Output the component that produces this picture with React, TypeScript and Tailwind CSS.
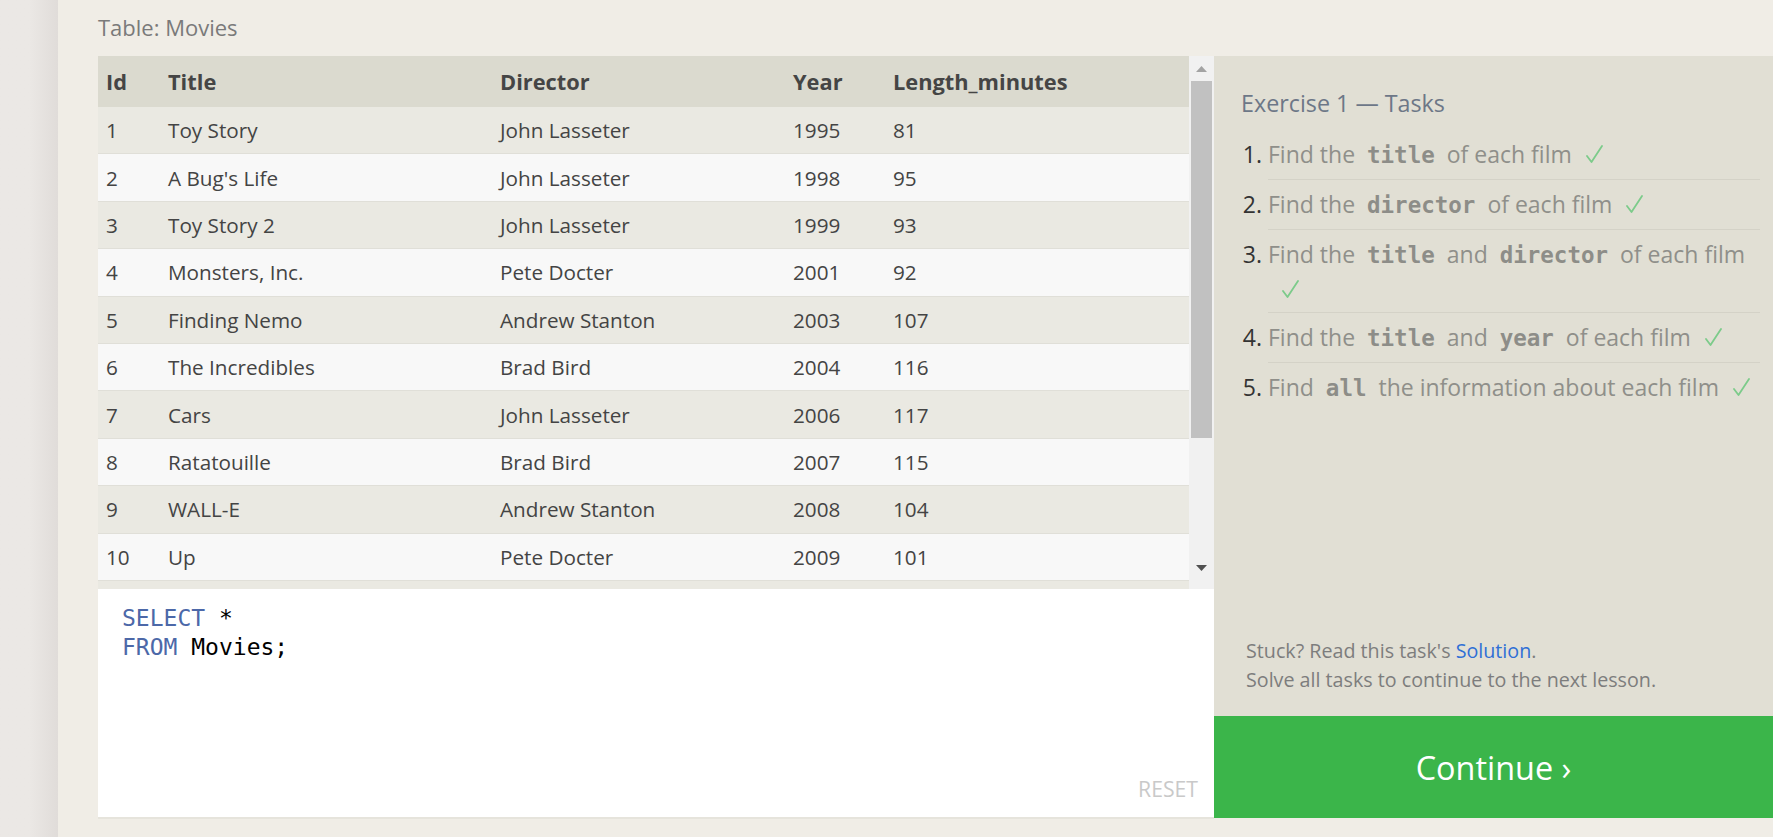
import React from "react";

const rows: [string, string, string, string, string][] = [
  ["1", "Toy Story", "John Lasseter", "1995", "81"],
  ["2", "A Bug's Life", "John Lasseter", "1998", "95"],
  ["3", "Toy Story 2", "John Lasseter", "1999", "93"],
  ["4", "Monsters, Inc.", "Pete Docter", "2001", "92"],
  ["5", "Finding Nemo", "Andrew Stanton", "2003", "107"],
  ["6", "The Incredibles", "Brad Bird", "2004", "116"],
  ["7", "Cars", "John Lasseter", "2006", "117"],
  ["8", "Ratatouille", "Brad Bird", "2007", "115"],
  ["9", "WALL-E", "Andrew Stanton", "2008", "104"],
  ["10", "Up", "Pete Docter", "2009", "101"],
];

const sans = "font-['Open_Sans',sans-serif]";
const mono = "font-['DejaVu_Sans_Mono',monospace]";

function Code({ children }: { children: React.ReactNode }) {
  return (
    <span className={`${mono} font-bold text-[22.5px] text-[#8d8d88] px-[6px]`}>{children}</span>
  );
}

function Check() {
  return (
    <svg
      className="ml-[14px] inline-block align-baseline"
      width="17"
      height="18"
      viewBox="0 0 17 18"
      fill="none"
    >
      <path d="M1 11 L5.5 17 L16 1" stroke="#7ccb8a" strokeWidth="1.8" strokeLinecap="round" strokeLinejoin="round" />
    </svg>
  );
}

const liCls = "border-b border-[#d4d2c7] py-[7px] leading-[34px]";

export default function App() {
  return (
    <div className={`flex min-h-[837px] w-full bg-[#f0ede6] ${sans}`}>
      <div className="w-[58px] shrink-0 bg-linear-to-r from-[#ebe8e5] from-50% to-[#e0dcd9]" />
      <div className="flex flex-1 flex-col pl-[40px]">
        <div className="flex h-[56px] items-start pt-[12px] text-[22px] leading-[30px] text-[#7a7a7a]">Table: Movies</div>
        <div className="flex">
          {/* left: table + editor */}
          <div className="flex w-[1116px] shrink-0 flex-col">
            <div className="flex h-[533px] bg-[#eae9e2]">
              <div className="flex w-[1091px] flex-col">
                <div className="flex h-[51px] items-center bg-[#dbdacf] pt-[1px] text-[21.8px] font-bold text-[#454545]">
                  <div className="w-[62px] pl-[8px]">Id</div>
                  <div className="w-[332px] pl-[8px]">Title</div>
                  <div className="w-[293px] pl-[8px]">Director</div>
                  <div className="w-[100px] pl-[8px]">Year</div>
                  <div className="flex-1 pl-[8px]">Length_minutes</div>
                </div>
                {rows.map((r, i) => (
                  <div
                    key={r[0]}
                    className={`flex h-[47.4px] items-center border-b border-[#e0dfd8] pt-[1px] text-[20.7px] text-[#444] ${
                      i % 2 === 0 ? "bg-[#eae9e2]" : "bg-[#f8f8f8]"
                    }`}
                  >
                    <div className="w-[62px] pl-[8px]">{r[0]}</div>
                    <div className="w-[332px] pl-[8px]">{r[1]}</div>
                    <div className="w-[293px] pl-[8px]">{r[2]}</div>
                    <div className="w-[100px] pl-[8px]">{r[3]}</div>
                    <div className="flex-1 pl-[8px]">{r[4]}</div>
                  </div>
                ))}
              </div>
              {/* scrollbar */}
              <div className="flex w-[25px] flex-col bg-[#f1f1f1]">
                <div className="flex h-[25px] items-center justify-center">
                  <svg width="11" height="6" viewBox="0 0 11 6">
                    <path d="M5.5 0 L11 6 L0 6 Z" fill="#a3a3a3" />
                  </svg>
                </div>
                <div className="mx-[2px] h-[357px] bg-[#c1c1c1]" />
                <div className="flex-1" />
                <div className="flex h-[28px] items-start justify-center pt-[4px]">
                  <svg width="11" height="6" viewBox="0 0 11 6">
                    <path d="M0 0 L11 0 L5.5 6 Z" fill="#505050" />
                  </svg>
                </div>
              </div>
            </div>
            {/* editor */}
            <div className="relative h-[230px] border-b-2 border-[#e6e4dc] bg-white pl-[24px] pt-[15px]">
              <div className={`${mono} text-[23px] leading-[29px] text-black`}>
                <div>
                  <span className="text-[#4c68a8]">SELECT</span> *
                </div>
                <div>
                  <span className="text-[#4c68a8]">FROM</span> Movies;
                </div>
              </div>
              <div className="absolute bottom-[12px] right-[16px] text-[21.2px] text-[#c9c9c9]">RESET</div>
            </div>
          </div>
          {/* right panel */}
          <div className="flex h-[762px] flex-1 flex-col bg-[#e1dfd4]">
            <div className="flex-1 pl-[27px] pr-[13px] pt-[31px]">
              <div className="text-[23.3px] leading-[32px] text-[#6d7787]">Exercise 1 — Tasks</div>
              <ol className="mt-[11px] list-decimal pl-[27px] text-[23px] text-[#333] marker:text-[#333]">
                <li className={liCls}>
                  <span className="text-[#8f8f8a]">
                    Find the <Code>title</Code> of each film
                    <Check />
                  </span>
                </li>
                <li className={liCls}>
                  <span className="text-[#8f8f8a]">
                    Find the <Code>director</Code> of each film
                    <Check />
                  </span>
                </li>
                <li className="border-b border-[#d4d2c7] pb-[6px] pt-[7px] leading-[34px]">
                  <span className="text-[#8f8f8a]">
                    Find the <Code>title</Code> and <Code>director</Code> of each film
                    <br />
                    <Check />
                  </span>
                </li>
                <li className={liCls}>
                  <span className="text-[#8f8f8a]">
                    Find the <Code>title</Code> and <Code>year</Code> of each film
                    <Check />
                  </span>
                </li>
                <li className="py-[7px] leading-[34px]">
                  <span className="text-[#8f8f8a]">
                    Find <Code>all</Code> the information about each film
                    <Check />
                  </span>
                </li>
              </ol>
            </div>
            <div className="pb-[22px] pl-[32px] text-[19.7px] leading-[29px] text-[#7d7d7d]">
              <div>
                Stuck? Read this task's <span className="text-[#2f6fd6]">Solution</span>.
              </div>
              <div>Solve all tasks to continue to the next lesson.</div>
            </div>
            <div className="flex h-[102px] items-center justify-center bg-[#3bb54a] text-[32.4px] text-white">
              Continue ›
            </div>
          </div>
        </div>
        <div className="flex-1" />
      </div>
    </div>
  );
}
